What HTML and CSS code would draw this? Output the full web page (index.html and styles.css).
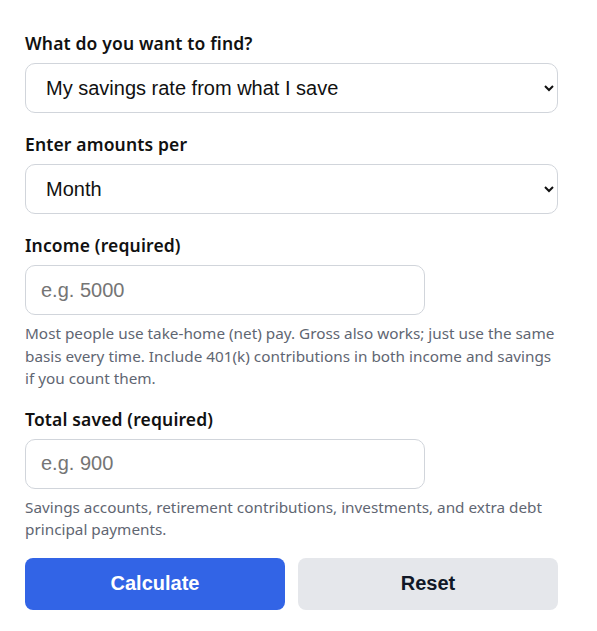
FILE: index.html
```html
<!DOCTYPE html>
<html lang="en">

<head>

    <meta charset="UTF-8">
    <meta name="viewport" content="width=device-width, initial-scale=1.0">
    <title>Savings rate</title>

    <link rel="stylesheet" href="styles.css">

</head>

<body>

    <form class="calc-form">

        <div class="field">
            <label for="mode">What do you want to find?</label>
            <select id="mode" class="control">
                <option>My savings rate from what I save</option>
                <option>How much to save for a target rate</option>
            </select>
        </div>

        <div class="field">
            <label for="period">Enter amounts per</label>
            <select id="period" class="control">
                <option>Month</option>
                <option>Year</option>
            </select>
        </div>

        <div class="field field-help">
            <label for="income">Income (required)</label>
            <input type="text" id="income" class="control input-short" placeholder="e.g. 5000">
            <p class="help">Most people use take-home (net) pay. Gross also works; just use the same basis every time. Include 401(k) contributions in both income and savings if you count them.</p>
        </div>

        <div class="field field-help">
            <label for="saved">Total saved (required)</label>
            <input type="text" id="saved" class="control input-short" placeholder="e.g. 900">
            <p class="help">Savings accounts, retirement contributions, investments, and extra debt principal payments.</p>
        </div>

        <div class="actions">
            <button type="button" class="btn btn-calc">Calculate</button>
            <button type="reset" class="btn btn-reset">Reset</button>
        </div>

    </form>

</body>

</html>
```

FILE: styles.css
```css
body {
    margin: 0;
    background-color: #fff;
    font-family: "Noto Sans", "Open Sans", sans-serif;
}

.calc-form {
    width: 533px;
    padding: 31px 25px;
}

.field {
    margin-bottom: 19px;
}

.field-help {
    margin-bottom: 17px;
}

.field label {
    display: block;
    font-size: 17.5px;
    font-weight: 600;
    letter-spacing: 0.15px;
    color: #111;
    margin-bottom: 8px;
    line-height: 24px;
}

.control {
    box-sizing: border-box;
    width: 100%;
    height: 50px;
    padding: 0 15px;
    border: 1px solid #d1d5db;
    border-radius: 10px;
    background-color: #fff;
    font-family: "Liberation Sans", Arial, sans-serif;
    font-size: 20px;
    color: #111;
}

select.control {
    padding-left: 16px;
}

.input-short {
    width: 400px;
}

.control::placeholder {
    color: #757575;
}

.help {
    margin: 7px 0 0;
    font-size: 15.3px;
    line-height: 22.5px;
    color: #5f6672;
}

.actions {
    display: flex;
    gap: 13px;
}

.btn {
    flex: 1;
    height: 52px;
    border: none;
    border-radius: 8px;
    font-family: "Liberation Sans", Arial, sans-serif;
    font-size: 20px;
    font-weight: bold;
    cursor: pointer;
}

.btn-calc {
    background-color: #3264e6;
    color: #fff;
}

.btn-reset {
    background-color: #e5e7eb;
    color: #111827;
}
```
